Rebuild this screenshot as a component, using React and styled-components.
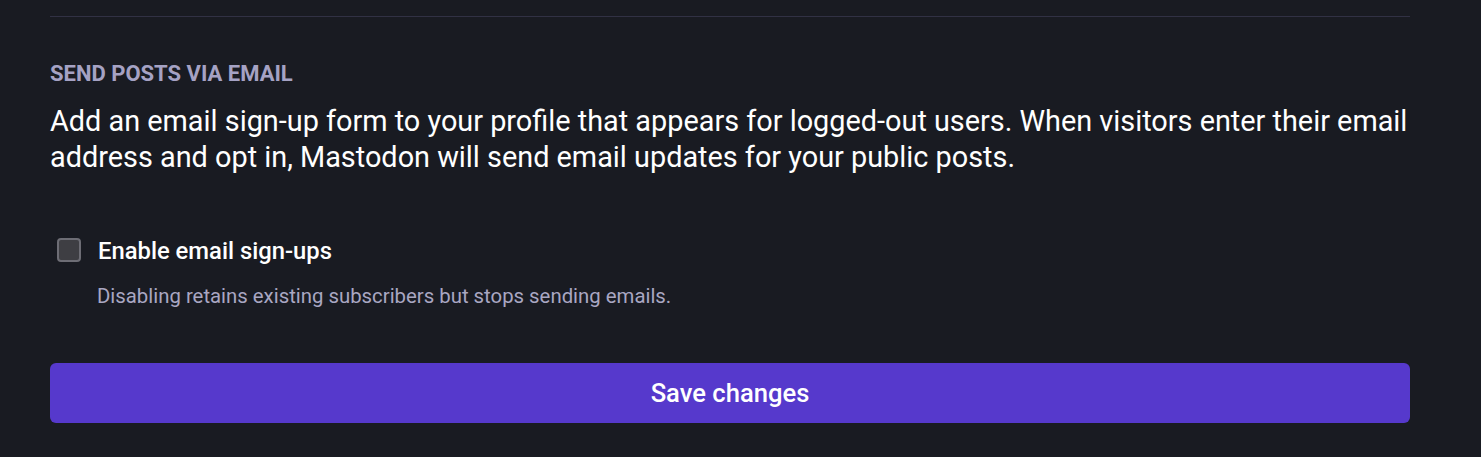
import React from "react";
import styled, { createGlobalStyle } from "styled-components";

const Global = createGlobalStyle`
  html, body { margin: 0; padding: 0; background: #191b22; }
  body { font-family: Roboto, "Noto Sans", sans-serif; -webkit-font-smoothing: antialiased; }
`;

const Page = styled.div`
  width: 1481px;
  height: 457px;
  background: #191b22;
  padding: 0 71px 0 50px;
  box-sizing: border-box;
  overflow: hidden;
`;

const Divider = styled.hr`
  margin: 16px 0 0;
  border: 0;
  border-top: 1px solid #313144;
  height: 0;
`;

const Section = styled.section`
  display: flex;
  flex-direction: column;
  padding-top: 44px;
`;

const Heading = styled.h2`
  margin: 0;
  font-size: 22px;
  font-weight: 700;
  text-transform: uppercase;
  color: #a5a2c4;
  line-height: 26px;
`;

const Lead = styled.p`
  margin: 16px 0 0;
  font-size: 28.85px;
  line-height: 36px;
  color: #ffffff;
`;

const CheckRow = styled.label`
  display: flex;
  align-items: center;
  gap: 17px;
  margin: 61px 0 0 7px;
  height: 30px;
`;

const Box = styled.span`
  width: 24px;
  height: 24px;
  box-sizing: border-box;
  border: 2px solid #6d6d75;
  border-radius: 4px;
  background: #3e3e43;
  flex-shrink: 0;
  margin-top: -3px;
`;

const LabelText = styled.span`
  font-size: 23.8px;
  font-weight: 500;
  color: #ffffff;
  line-height: 30px;
`;

const Hint = styled.p`
  margin: 17px 0 0 47px;
  font-size: 20.35px;
  line-height: 26px;
  color: #a9a7c2;
`;

const SaveButton = styled.button`
  margin-top: 54px;
  height: 60px;
  width: 100%;
  border: 0;
  border-radius: 6px;
  background: #5639cc;
  color: #ffffff;
  font-family: Roboto, sans-serif;
  font-size: 25.6px;
  font-weight: 500;
  cursor: pointer;
`;

export default function App() {
  return (
    <>
      <Global />
      <Page>
        <Divider />
        <Section>
          <Heading>Send posts via email</Heading>
          <Lead>
            Add an email sign-up form to your profile that appears for logged-out users. When visitors enter their email
            address and opt in, Mastodon will send email updates for your public posts.
          </Lead>
          <CheckRow>
            <Box />
            <LabelText>Enable email sign-ups</LabelText>
          </CheckRow>
          <Hint>Disabling retains existing subscribers but stops sending emails.</Hint>
          <SaveButton>Save changes</SaveButton>
        </Section>
      </Page>
    </>
  );
}
